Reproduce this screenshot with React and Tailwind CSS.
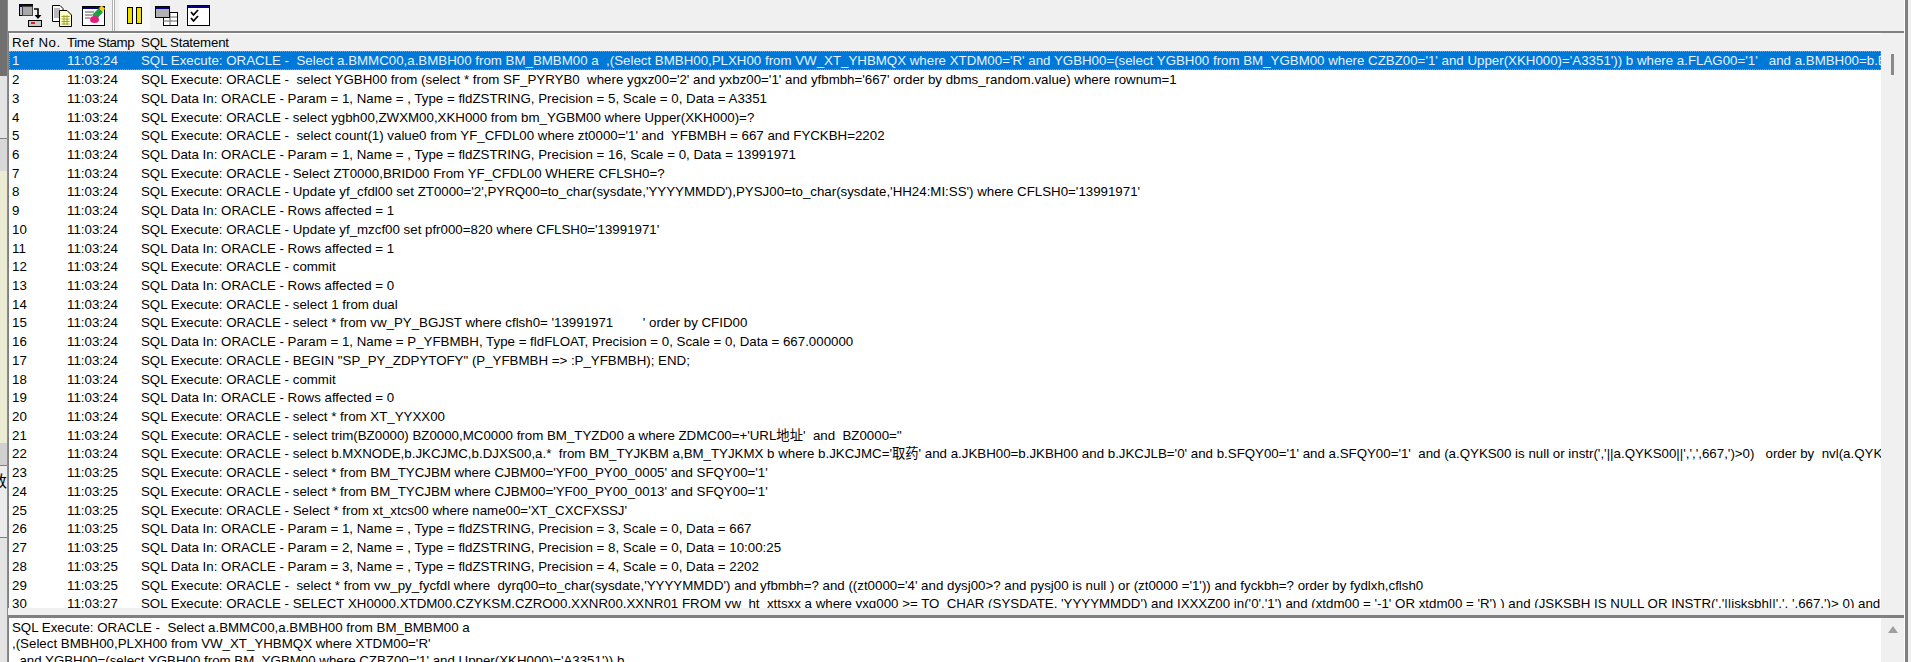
const rows = [
  ["1","11:03:24","SQL Execute: ORACLE -  Select a.BMMC00,a.BMBH00 from BM_BMBM00 a  ,(Select BMBH00,PLXH00 from VW_XT_YHBMQX where XTDM00='R' and YGBH00=(select YGBH00 from BM_YGBM00 where CZBZ00='1' and Upper(XKH000)='A3351')) b where a.FLAG00='1'   and a.BMBH00=b.BMBH00 and a.BMBH00=b.BMBH00"],
  ["2","11:03:24","SQL Execute: ORACLE -  select YGBH00 from (select * from SF_PYRYB0  where ygxz00='2' and yxbz00='1' and yfbmbh='667' order by dbms_random.value) where rownum=1"],
  ["3","11:03:24","SQL Data In: ORACLE - Param = 1, Name = , Type = fldZSTRING, Precision = 5, Scale = 0, Data = A3351"],
  ["4","11:03:24","SQL Execute: ORACLE - select ygbh00,ZWXM00,XKH000 from bm_YGBM00 where Upper(XKH000)=?"],
  ["5","11:03:24","SQL Execute: ORACLE -  select count(1) value0 from YF_CFDL00 where zt0000='1' and  YFBMBH = 667 and FYCKBH=2202"],
  ["6","11:03:24","SQL Data In: ORACLE - Param = 1, Name = , Type = fldZSTRING, Precision = 16, Scale = 0, Data = 13991971"],
  ["7","11:03:24","SQL Execute: ORACLE - Select ZT0000,BRID00 From YF_CFDL00 WHERE CFLSH0=?"],
  ["8","11:03:24","SQL Execute: ORACLE - Update yf_cfdl00 set ZT0000='2',PYRQ00=to_char(sysdate,'YYYYMMDD'),PYSJ00=to_char(sysdate,'HH24:MI:SS') where CFLSH0='13991971'"],
  ["9","11:03:24","SQL Data In: ORACLE - Rows affected = 1"],
  ["10","11:03:24","SQL Execute: ORACLE - Update yf_mzcf00 set pfr000=820 where CFLSH0='13991971'"],
  ["11","11:03:24","SQL Data In: ORACLE - Rows affected = 1"],
  ["12","11:03:24","SQL Execute: ORACLE - commit"],
  ["13","11:03:24","SQL Data In: ORACLE - Rows affected = 0"],
  ["14","11:03:24","SQL Execute: ORACLE - select 1 from dual"],
  ["15","11:03:24","SQL Execute: ORACLE - select * from vw_PY_BGJST where cflsh0= '13991971        ' order by CFID00"],
  ["16","11:03:24","SQL Data In: ORACLE - Param = 1, Name = P_YFBMBH, Type = fldFLOAT, Precision = 0, Scale = 0, Data = 667.000000"],
  ["17","11:03:24","SQL Execute: ORACLE - BEGIN \"SP_PY_ZDPYTOFY\" (P_YFBMBH => :P_YFBMBH); END;"],
  ["18","11:03:24","SQL Execute: ORACLE - commit"],
  ["19","11:03:24","SQL Data In: ORACLE - Rows affected = 0"],
  ["20","11:03:24","SQL Execute: ORACLE - select * from XT_YYXX00"],
  ["21","11:03:24","SQL Execute: ORACLE - select trim(BZ0000) BZ0000,MC0000 from BM_TYZD00 a where ZDMC00=+'URL地址'  and  BZ0000=''"],
  ["22","11:03:24","SQL Execute: ORACLE - select b.MXNODE,b.JKCJMC,b.DJXS00,a.*  from BM_TYJKBM a,BM_TYJKMX b where b.JKCJMC='取药' and a.JKBH00=b.JKBH00 and b.JKCJLB='0' and b.SFQY00='1' and a.SFQY00='1'  and (a.QYKS00 is null or instr(','||a.QYKS00||',',',667,')>0)   order by  nvl(a.QYKS00,'0') desc"],
  ["23","11:03:25","SQL Execute: ORACLE - select * from BM_TYCJBM where CJBM00='YF00_PY00_0005' and SFQY00='1'"],
  ["24","11:03:25","SQL Execute: ORACLE - select * from BM_TYCJBM where CJBM00='YF00_PY00_0013' and SFQY00='1'"],
  ["25","11:03:25","SQL Execute: ORACLE - Select * from xt_xtcs00 where name00='XT_CXCFXSSJ'"],
  ["26","11:03:25","SQL Data In: ORACLE - Param = 1, Name = , Type = fldZSTRING, Precision = 3, Scale = 0, Data = 667"],
  ["27","11:03:25","SQL Data In: ORACLE - Param = 2, Name = , Type = fldZSTRING, Precision = 8, Scale = 0, Data = 10:00:25"],
  ["28","11:03:25","SQL Data In: ORACLE - Param = 3, Name = , Type = fldZSTRING, Precision = 4, Scale = 0, Data = 2202"],
  ["29","11:03:25","SQL Execute: ORACLE -  select * from vw_py_fycfdl where  dyrq00=to_char(sysdate,'YYYYMMDD') and yfbmbh=? and ((zt0000='4' and dysj00>? and pysj00 is null ) or (zt0000 ='1')) and fyckbh=? order by fydlxh,cflsh0"],
  ["30","11:03:27","SQL Execute: ORACLE - SELECT XH0000,XTDM00,CZYKSM,CZRQ00,XXNR00,XXNR01 FROM vw_ht_xttsxx a where yxq000 >= TO_CHAR (SYSDATE, 'YYYYMMDD') and IXXXZ00 in('0','1') and (xtdm00 = '-1' OR xtdm00 = 'R') ) and (JSKSBH IS NULL OR INSTR(','||jsksbh||',', ',667,')> 0) and"],
];

function Icon1() {
  return (
    <svg width="24" height="23" viewBox="0 0 24 23" className="shrink-0">
      <rect x="0.5" y="0.5" width="13" height="11" fill="#c0c0c0" stroke="#000" />
      <rect x="1" y="1" width="12" height="2" fill="#000080" />
      <rect x="3.5" y="2.5" width="10" height="9" fill="#a8a8a8" stroke="#444" />
      <path d="M15 5 H19 V12" fill="none" stroke="#000" strokeWidth="1.6" />
      <path d="M15.5 11 H22.5 L19 15 Z" fill="#000" />
      <rect x="9.5" y="16.5" width="13" height="6" fill="#c8c8c8" stroke="#000" />
      <rect x="12" y="18" width="4" height="2" fill="#e02020" />
    </svg>
  );
}
function Icon2() {
  return (
    <svg width="20" height="22" viewBox="0 0 20 22" className="shrink-0">
      <path d="M0.5 0.5 H8 L11 3.5 V16.5 H0.5 Z" fill="#fff" stroke="#000" />
      <path d="M2 4 H8 M2 6 H9 M2 8 H9 M2 10 H7 M2 12 H7" stroke="#777" />
      <path d="M7.5 5.5 H15 L19.5 10 V21.5 H7.5 Z" fill="#ffffc0" stroke="#000" />
      <path d="M9.5 11.5 H17.5 M9.5 14 H17.5 M9.5 16.5 H17.5 M9.5 19 H17.5 M12 10 V20 M15 10 V20" stroke="#a0a040" />
    </svg>
  );
}
function Icon3() {
  return (
    <svg width="24" height="21" viewBox="0 0 24 21" className="shrink-0">
      <rect x="0.5" y="1.5" width="22" height="19" fill="#fff" stroke="#000" />
      <rect x="1" y="2" width="21" height="2" fill="#000080" />
      <path d="M3 7 H12 M3 10 H10 M3 13 H8" stroke="#555" />
      <path d="M10 10 L17 3 L21 7 L15 14 Z" fill="#20a040" />
      <path d="M17 3 L19.5 0.5 L23 3.5 L21 7 Z" fill="#f0d020" />
      <ellipse cx="12.5" cy="14.5" rx="4.5" ry="3.5" fill="#e02080" />
    </svg>
  );
}
function PauseIcon() {
  return (
    <svg width="15" height="17" viewBox="0 0 15 17" className="shrink-0">
      <rect x="0.5" y="0.5" width="5" height="16" fill="#f0e000" stroke="#000" />
      <rect x="9.5" y="0.5" width="5" height="16" fill="#f0e000" stroke="#000" />
    </svg>
  );
}
function Icon5() {
  return (
    <svg width="23" height="20" viewBox="0 0 23 20" className="shrink-0">
      <rect x="8.5" y="6.5" width="14" height="13" fill="#fff" stroke="#000" />
      <path d="M8 11 H22 M8 15 H22 M15 7 V19" stroke="#666" />
      <rect x="0.5" y="0.5" width="14" height="11" fill="#b0b0b0" stroke="#000" />
      <rect x="1" y="1" width="13" height="2" fill="#000080" />
    </svg>
  );
}
function Icon6() {
  return (
    <svg width="23" height="21" viewBox="0 0 23 21" className="shrink-0">
      <rect x="0.5" y="0.5" width="22" height="20" fill="#fff" stroke="#000" />
      <rect x="1" y="1" width="21" height="2" fill="#000080" />
      <path d="M4 7 L6.5 10 L11 5 M4 13 L6.5 16 L11 11" fill="none" stroke="#000" strokeWidth="1.8" />
    </svg>
  );
}

export default function App() {
  return (
    <div className="flex h-[662px] w-[1911px] overflow-hidden bg-[#f0f0f0] text-[13.3px] text-black font-['Liberation_Sans','Noto_Sans_CJK_SC',sans-serif]">
      <div className="flex h-full w-[8px] shrink-0 flex-col border-r border-[#8a8a8a]">
        <div className="h-[76px] bg-[#707070]" />
        <div className="h-[63px] border-b border-[#808080] bg-[#e4e4e4]" />
        <div className="h-[32px] bg-[#d8d8d8]" />
        <div className="h-[272px] bg-[#ecebd4]" />
        <div className="h-[23px] border-b border-[#808080] bg-[#d0d0d0]" />
        <div className="flex h-[72px] items-start justify-end overflow-hidden border-b border-[#808080] bg-[#ececec] pt-[6px] text-[16px] leading-[20px]">
          <span className="shrink-0">数</span>
        </div>
        <div className="flex-1 bg-[#e4e4e4]" />
      </div>
      <div className="flex h-full min-w-0 flex-1 flex-col">
        <div className="flex h-[33px] shrink-0 items-center border-b-2 border-[#808080] bg-[#f0f0f0] pl-[11px]">
          <Icon1 />
          <div className="ml-[9px]"><Icon2 /></div>
          <div className="ml-[10px]"><Icon3 /></div>
          <div className="ml-[6px] h-full w-[3px] border-x border-[#b0b0b0] bg-white" />
          <div className="ml-[4px] flex h-full w-[31px] items-center justify-center bg-[#f8f8f8]"><PauseIcon /></div>
          <div className="ml-[5px]"><Icon5 /></div>
          <div className="ml-[9px]"><Icon6 /></div>
        </div>
        <div className="flex min-h-0 flex-1">
          <div className="min-w-0 flex-1 overflow-hidden border-l border-[#808080] bg-white">
            <div className="flex h-[18px] items-center border-t border-white bg-[#f0f0f0] pl-[3px] whitespace-pre">
              <div className="w-[55px] shrink-0 tracking-[0.5px]">Ref No.</div>
              <div className="w-[74px] shrink-0 tracking-[-0.4px]">Time Stamp</div>
              <div className="tracking-[-0.2px]">SQL Statement</div>
            </div>
            {rows.map(([n, t, s], i) => (
              <div
                key={n}
                className={i === 0
                  ? "flex h-[18.72px] items-center overflow-hidden whitespace-pre bg-[#0078d7] pl-[3px] pt-[2px] text-[#e6f2ff] outline-1 -outline-offset-1 outline-dotted outline-[#d09050]"
                  : "flex h-[18.72px] items-center overflow-hidden whitespace-pre pl-[3px] pt-[2px]"}
              >
                <div className="w-[55px] shrink-0">{n}</div>
                <div className="w-[74px] shrink-0">{t}</div>
                <div>{s}</div>
              </div>
            ))}
          </div>
          <div className="flex w-[23px] shrink-0 justify-center bg-[#f0f0f0] pt-[21px]">
            <div className="h-[21px] w-[3px] bg-[#8a8a8a]" />
          </div>
        </div>
        <div className="h-[10px] shrink-0 border-b-[3px] border-[#808080] bg-[#f0f0f0]" />
        <div className="flex h-[44px] shrink-0">
          <div className="min-w-0 flex-1 overflow-hidden whitespace-pre border-l border-[#808080] bg-white pl-[3px] pt-[2px] leading-[16.3px]">
            <div>SQL Execute: ORACLE -  Select a.BMMC00,a.BMBH00 from BM_BMBM00 a</div>
            <div>,(Select BMBH00,PLXH00 from VW_XT_YHBMQX where XTDM00='R'</div>
            <div>  and YGBH00=(select YGBH00 from BM_YGBM00 where CZBZ00='1' and Upper(XKH000)='A3351')) b</div>
          </div>
          <div className="flex w-[23px] shrink-0 justify-center bg-[#f0f0f0] pt-[8px]">
            <svg width="10" height="7" viewBox="0 0 10 7"><path d="M5 0 L10 7 H0 Z" fill="#a0a0a0" /></svg>
          </div>
        </div>
      </div>
      <div className="flex h-full w-[7px] shrink-0">
        <div className="w-[1px] bg-white" />
        <div className="w-[3px] bg-[#808080]" />
        <div className="flex-1 bg-[#f0f0f0]" />
      </div>
    </div>
  );
}
